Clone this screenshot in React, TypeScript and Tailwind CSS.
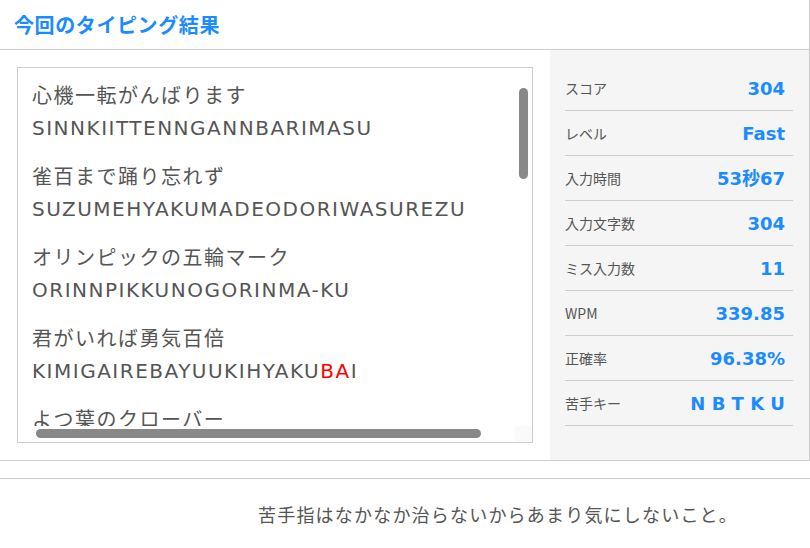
import React from 'react'

const jp = '"Noto Sans CJK JP", sans-serif'
const latinJp = '"DejaVu Sans", "Noto Sans CJK JP", sans-serif'

type Line = { kana: string; roma: string; miss?: [number, number] }

const lines: Line[] = [
  { kana: '心機一転がんばります', roma: 'SINNKIITTENNGANNBARIMASU' },
  { kana: '雀百まで踊り忘れず', roma: 'SUZUMEHYAKUMADEODORIWASUREZU' },
  { kana: 'オリンピックの五輪マーク', roma: 'ORINNPIKKUNOGORINMA-KU' },
  { kana: '君がいれば勇気百倍', roma: 'KIMIGAIREBAYUUKIHYAKUBAI', miss: [21, 23] },
  { kana: 'よつ葉のクローバー', roma: 'YOTUBANOKURO-BA-' },
]

const stats: [string, string][] = [
  ['スコア', '304'],
  ['レベル', 'Fast'],
  ['入力時間', '53秒67'],
  ['入力文字数', '304'],
  ['ミス入力数', '11'],
  ['WPM', '339.85'],
  ['正確率', '96.38%'],
  ['苦手キー', 'N B T K U'],
]

function Roma({ line }: { line: Line }) {
  if (!line.miss) return <>{line.roma}</>
  const [a, b] = line.miss
  return (
    <>
      {line.roma.slice(0, a)}
      <span className="text-[#ff0000]">{line.roma.slice(a, b)}</span>
      {line.roma.slice(b)}
    </>
  )
}

export default function App() {
  return (
    <div className="w-[810px] h-[548px] bg-white overflow-hidden" style={{ fontFamily: jp }}>
      <div className="w-[810px] border-r border-b border-[#cccccc]">
        {/* title */}
        <div className="h-[50px] border-b border-[#cccccc] flex items-center pl-[14px]">
          <h2 className="text-[20px] font-bold tracking-[0.6px] text-[#1a8cff] leading-none">
            今回のタイピング結果
          </h2>
        </div>

        <div className="flex h-[410px]">
          {/* typed words */}
          <div className="w-[550px] pt-[17px] pl-[17px]">
            <div className="relative w-[516px] h-[376px] border border-[#cccccc] overflow-hidden">
              <div
                className="pl-[14px] pt-[12px] text-[20px] tracking-[1.5px] text-[#555555] leading-[32px] flex flex-col gap-[17px]"
                style={{ fontFamily: latinJp }}
              >
                {lines.map((l) => (
                  <div key={l.roma}>
                    <div>{l.kana}</div>
                    <div className="whitespace-nowrap">
                      <Roma line={l} />
                    </div>
                  </div>
                ))}
              </div>
              {/* scrollbars */}
              <div className="absolute left-0 right-0 bottom-0 h-[16px] bg-white" />
              <div className="absolute top-0 right-0 bottom-0 w-[17px] bg-white" />
              <div className="absolute right-0 bottom-0 w-[17px] h-[16px] bg-[#fafafa]" />
              <div className="absolute left-[18px] top-[361px] w-[445px] h-[9px] rounded-full bg-[#888888]" />
              <div className="absolute left-[501px] top-[20px] w-[9px] h-[91px] rounded-full bg-[#888888]" />
            </div>
          </div>

          {/* stats */}
          <div className="flex-1 bg-[#f5f5f5] pl-[15px] pr-[16px] pt-[16px]">
            {stats.map(([k, v]) => (
              <div
                key={k}
                className="h-[45px] border-b border-[#cccccc] flex items-center justify-between pr-[8px]"
              >
                <span className="text-[14px] text-[#555555]">{k}</span>
                <span className="text-[18px] font-bold text-[#1a8cff]" style={{ fontFamily: latinJp }}>
                  {v}
                </span>
              </div>
            ))}
          </div>
        </div>
      </div>

      {/* advice */}
      <div className="mt-[17px] border-t border-[#cccccc] pt-[21px] pl-[258px]">
        <p className="text-[18px] tracking-[1.2px] text-[#555555] leading-[28px]">
          苦手指はなかなか治らないからあまり気にしないこと。
        </p>
      </div>
    </div>
  )
}
